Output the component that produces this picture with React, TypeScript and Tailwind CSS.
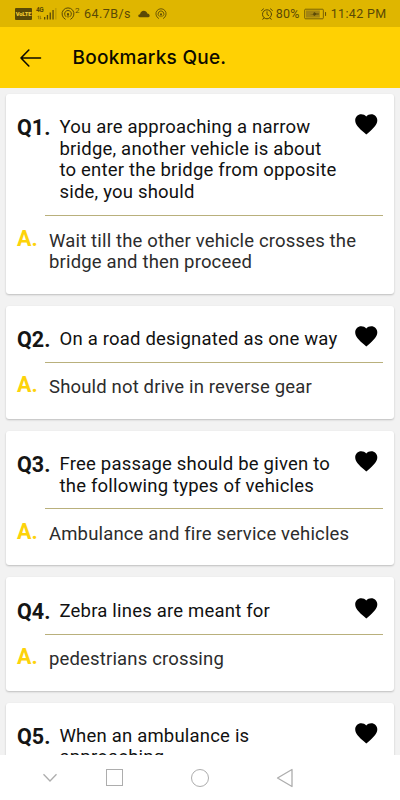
import { MdFavorite } from 'react-icons/md';

type Bookmark = { id: number; question: string[]; answer: string[] };

const BOOKMARKS: Bookmark[] = [
  {
    id: 1,
    question: ['You are approaching a narrow', 'bridge, another vehicle is about', 'to enter the bridge from opposite', 'side, you should'],
    answer: ['Wait till the other vehicle crosses the', 'bridge and then proceed'],
  },
  { id: 2, question: ['On a road designated as one way'], answer: ['Should not drive in reverse gear'] },
  { id: 3, question: ['Free passage should be given to', 'the following types of vehicles'], answer: ['Ambulance and fire service vehicles'] },
  { id: 4, question: ['Zebra lines are meant for'], answer: ['pedestrians crossing'] },
  { id: 5, question: ['When an ambulance is', 'approaching'], answer: [] },
];

function Hotspot({ className }: { className: string }) {
  return (
    <svg viewBox="0 0 14 14" className={className} fill="none" stroke="currentColor" strokeLinecap="round">
      <path d="M4.2 12.2a6 6 0 1 1 5.6 0" />
      <path d="M4.9 9.6a3.4 3.4 0 1 1 4.2 0" />
      <circle cx="7" cy="7.2" r="1.1" fill="currentColor" stroke="none" />
      <path d="M7 7.5v2.7" />
    </svg>
  );
}

function StatusBar() {
  return (
    <div className="flex h-[27px] items-center bg-[#dfb600] pt-px pr-[13.5px] pl-[15px] text-[12.5px] text-[#5a4906]">
      <span className="flex h-[12px] w-[17px] shrink-0 items-center justify-center rounded-[1px] bg-[#5a4906] text-[5.8px] leading-[8px] font-black tracking-[-0.2px] text-[#f0ca30]">VoLTE</span>
      <div className="ml-[4px] flex h-[14px] w-[21px] shrink-0">
        <div className="flex w-[8px] flex-col">
          <span className="text-[6.5px] leading-[7px] font-bold tracking-[-0.4px]">4G</span>
          <svg viewBox="0 0 7 6" className="mt-px h-[5px] w-[7px]" stroke="currentColor" strokeWidth="0.6" fill="none">
            <path d="M2.5 5V1L1.5 2.2M4.5 1v4l1-1.2" />
          </svg>
        </div>
        <svg viewBox="0 0 13 14" className="h-[14px] w-[13px] shrink-0" fill="currentColor">
          <path d="M0 10h1.3v2.5H0zM2.8 8h1.3v4.5H2.8zM5.6 5.5h1.3v7H5.6zM8.4 3h1.3v9.5H8.4z" />
          <path d="M11.5 1h.8v11.5h-.8z" opacity=".4" />
        </svg>
      </div>
      <Hotspot className="ml-[4px] h-[14px] w-[14px] shrink-0" />
      <span className="-mt-[7px] text-[8px]">2</span>
      <span className="ml-[4.5px] tracking-[0.45px]">64.7B/s</span>
      <svg viewBox="0 0 12 8" className="ml-[7px] h-[8px] w-[12px]" fill="currentColor">
        <path d="M1.7 7.2C-.3 7.2-.2 4.3 2 4.3 2.4 2 3.9.8 5.8.8c1.7 0 3 1 3.5 2.6C12 3.5 12.5 7.2 10.3 7.2z" />
      </svg>
      <Hotspot className="ml-[5px] h-[12px] w-[12px]" />
      <div className="ml-auto flex items-center">
        <svg viewBox="0 0 12 12" className="h-[12px] w-[12px]" fill="none" stroke="currentColor" strokeLinecap="round">
          <circle cx="6" cy="6.3" r="4.5" />
          <path d="M6 3.8v2.7l1.7 1M.6 2.5 2.5.9M11.4 2.5 9.5.9M2.8 10l-1 1.3M9.2 10l1 1.3" />
        </svg>
        <span className="ml-[2.5px] tracking-[0.2px]">80%</span>
        <svg viewBox="0 0 24 12" className="ml-[4px] h-[12px] w-[23px]" fill="none" stroke="currentColor">
          <rect x=".7" y="1" width="19.5" height="10" rx="1" strokeWidth=".8" />
          <path d="M2 2.2h14.5v7.6H2z" fill="#a48512" stroke="none" />
          <path d="M6 6h3.5l1-2 2.5 1.6h2.5v.8H13L10.5 8l-1-1.5z" fill="currentColor" stroke="none" />
          <path d="M22.5 4v4" />
        </svg>
        <span className="ml-[4px] tracking-[0.35px]">11:42 PM</span>
      </div>
    </div>
  );
}

function Header() {
  return (
    <header className="flex h-[61px] items-center bg-[#ffd103] pl-[20px]">
      <svg viewBox="0 0 22 18" className="h-[18px] w-[22px]" fill="none" stroke="#0d0b00" strokeWidth="1.6" strokeLinecap="round" strokeLinejoin="round">
        <path d="M20.5 9H1M8.8 1 1 9l7.8 8" />
      </svg>
      <h1 className="ml-[30.5px] font-['Inter',sans-serif] text-[19px] leading-6 font-medium tracking-[0.26px] text-[#0d0b00]">Bookmarks Que.</h1>
    </header>
  );
}

function QuestionCard({ item }: { item: Bookmark }) {
  return (
    <article className="shrink-0 rounded-[3px] bg-white px-[11px] pt-[23.2px] pb-[19.5px] shadow-[0_1px_2px_rgba(0,0,0,0.22)]">
      <div className="flex items-start">
        <span className="w-[42.5px] shrink-0 text-[21.5px] leading-[21.7px] font-bold text-[#151515]">Q{item.id}.</span>
        <div className="min-w-0 flex-1 text-[18.5px] leading-[21.7px] tracking-[0.2px] text-[#111]">
          {item.question.map(line => (
            <p key={line} className="whitespace-nowrap">{line}</p>
          ))}
        </div>
        <MdFavorite className="-mt-[5.5px] mr-[3.4px] -mb-[8px] size-[26.5px] shrink-0 text-black" />
      </div>
      <div className="mt-[11.2px] ml-[27.5px] h-px bg-[#b9b07c]" />
      <div className="mt-[14.8px] flex items-start">
        <span className="-mt-[3px] w-[32px] shrink-0 text-[21.5px] leading-[22px] font-bold text-[#fdd30b]">A.</span>
        <div className="text-[18.5px] leading-[21.7px] tracking-[0.16px] text-[#2c2c2c]">
          {item.answer.map(line => (
            <p key={line} className="whitespace-nowrap">{line}</p>
          ))}
        </div>
      </div>
    </article>
  );
}

function NavBar() {
  return (
    <nav className="flex h-[45px] shrink-0 items-center bg-white pl-[42px] text-[#adadad]">
      <svg viewBox="0 0 16 10" className="h-[10px] w-[16px]" fill="none" stroke="currentColor" strokeWidth="1.3">
        <path d="M1.5 1.3 8 8l6.5-6.7" />
      </svg>
      <span className="ml-[48px] size-[17px] border-[1.5px] border-current" />
      <span className="ml-[68px] size-[18px] rounded-full border border-current" />
      <svg viewBox="0 0 18 20" className="ml-[67px] h-[20px] w-[18px]" fill="none" stroke="currentColor" strokeWidth="1.3" strokeLinejoin="round">
        <path d="M1.5 10 16 1.5v17z" />
      </svg>
    </nav>
  );
}

export default function App() {
  return (
    <div className="flex h-[800px] w-[400px] flex-col overflow-hidden bg-[#f2f2f2] font-['Roboto',sans-serif]">
      <StatusBar />
      <Header />
      <main className="flex min-h-0 flex-1 flex-col gap-[12px] overflow-hidden px-[6px] pt-[5.7px]">
        {BOOKMARKS.map(item => (
          <QuestionCard key={item.id} item={item} />
        ))}
      </main>
      <NavBar />
    </div>
  );
}
